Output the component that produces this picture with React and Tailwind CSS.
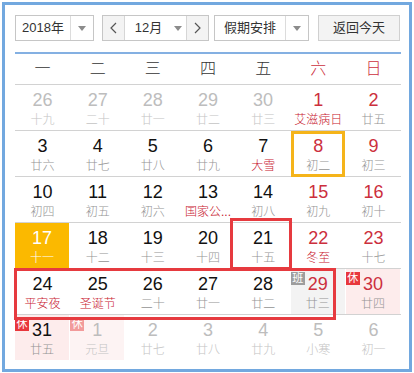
import React from 'react';

const font = { fontFamily: '"Liberation Sans", "Noto Sans CJK SC", sans-serif' };

// o: other month, h: holiday text (red), w: weekend number red
const rows = [
  [
    { d: 26, l: '十九', o: 1 }, { d: 27, l: '二十', o: 1 }, { d: 28, l: '廿一', o: 1 },
    { d: 29, l: '廿二', o: 1 }, { d: 30, l: '廿三', o: 1 },
    { d: 1, l: '艾滋病日', h: 1, w: 1 }, { d: 2, l: '廿五', w: 1 },
  ],
  [
    { d: 3, l: '廿六' }, { d: 4, l: '廿七' }, { d: 5, l: '廿八' }, { d: 6, l: '廿九' },
    { d: 7, l: '大雪', h: 1 }, { d: 8, l: '初二', w: 1, sel: 1 }, { d: 9, l: '初三', w: 1 },
  ],
  [
    { d: 10, l: '初四' }, { d: 11, l: '初五' }, { d: 12, l: '初六' }, { d: 13, l: '国家公...', h: 1 },
    { d: 14, l: '初八' }, { d: 15, l: '初九', w: 1 }, { d: 16, l: '初十', w: 1 },
  ],
  [
    { d: 17, l: '十一', today: 1 }, { d: 18, l: '十二' }, { d: 19, l: '十三' }, { d: 20, l: '十四' },
    { d: 21, l: '十五' }, { d: 22, l: '冬至', h: 1, w: 1 }, { d: 23, l: '十七', w: 1 },
  ],
  [
    { d: 24, l: '平安夜', h: 1 }, { d: 25, l: '圣诞节', h: 1 }, { d: 26, l: '二十' }, { d: 27, l: '廿一' },
    { d: 28, l: '廿二' }, { d: 29, l: '廿三', w: 1, badge: 'work' }, { d: 30, l: '廿四', w: 1, badge: 'rest' },
  ],
  [
    { d: 31, l: '廿五', badge: 'rest' }, { d: 1, l: '元旦', o: 1, badge: 'restFaded' }, { d: 2, l: '廿七', o: 1 },
    { d: 3, l: '廿八', o: 1 }, { d: 4, l: '廿九', o: 1 }, { d: 5, l: '小寒', o: 1 }, { d: 6, l: '初一', o: 1 },
  ],
];

function Caret() {
  return (
    <svg width="8" height="5" viewBox="0 0 8 5">
      <path d="M0 0h8L4 5z" fill="#8c8c8c" />
    </svg>
  );
}

function Chevron({ left }) {
  return (
    <svg width="7" height="12" viewBox="0 0 7 12">
      <path d={left ? 'M6 1L1 6l5 5' : 'M1 1l5 5-5 5'} fill="none" stroke="#555" strokeWidth="1.2" />
    </svg>
  );
}

function DayCell({ c }) {
  let bg = '';
  if (c.today) bg = 'bg-[#fbb900]';
  else if (c.badge === 'work') bg = 'bg-[#f3f3f3]';
  else if (c.badge === 'rest') bg = 'bg-[#fdecec]';
  else if (c.badge === 'restFaded') bg = 'bg-[#fdf3f3]';

  let num = 'text-[#111]';
  if (c.today) num = 'text-white';
  else if (c.o) num = 'text-[#bdbdbd]';
  else if (c.w) num = 'text-[#cc2f3d]';

  let lun = 'text-[#949494]';
  if (c.today) lun = 'text-white';
  else if (c.o) lun = 'text-[#c4c4c4]';
  else if (c.h) lun = 'text-[#c8202f]';

  return (
    <div className={`relative h-[45px] ${c.today || c.badge ? 'mr-[1px]' : ''} ${bg}`}>
      {c.badge === 'work' && (
        <span className="absolute left-0 top-[3px] w-[14px] h-[13px] bg-[#9d9d9d] text-white text-[11px] leading-[13px] text-center">班</span>
      )}
      {c.badge === 'rest' && (
        <span className="absolute left-0 top-[3px] w-[14px] h-[13px] bg-[#e8373c] text-white text-[11px] leading-[13px] text-center">休</span>
      )}
      {c.badge === 'restFaded' && (
        <span className="absolute left-0 top-[3px] w-[14px] h-[13px] bg-[#f29b9b] text-white text-[11px] leading-[13px] text-center">休</span>
      )}
      <div className={`pt-[5px] text-center text-[18px] leading-[20px] ${num}`}>{c.d}</div>
      <div className={`mt-[3px] text-center text-[12px] leading-[14px] font-light whitespace-nowrap ${lun}`}>{c.l}</div>
      {c.sel && <div className="absolute left-0 top-0 w-[54px] h-[46px] border-[3px] border-[#f5b41a]" />}
    </div>
  );
}

export default function App() {
  const week = ['一', '二', '三', '四', '五', '六', '日'];
  return (
    <div className="relative w-[414px] h-[373px] bg-white overflow-hidden" style={font}>
      <div className="ml-[2px] mt-[2px] w-[410px] h-[370px] border-[3px] border-[#72a8df] pl-[10px] pr-[8px] pt-[10px]">
        {/* toolbar */}
        <div className="flex items-center h-[26px] text-[13px] text-[#333]">
          <div className="flex h-full w-[79px] border border-[#c6c6c6] bg-white">
            <div className="w-[54px] flex items-center justify-center">2018年</div>
            <div className="flex-1 border-l border-[#dcdcdc] flex items-center justify-center"><Caret /></div>
          </div>
          <div className="flex h-full w-[107px] ml-[8px] border border-[#c6c6c6] bg-white">
            <div className="w-[22px] bg-[#f3f3f3] border-r border-[#d6d6d6] flex items-center justify-center"><Chevron left /></div>
            <div className="flex-1 flex items-center justify-center gap-[12px] pl-[6px]">
              <span>12月</span>
              <Caret />
            </div>
            <div className="w-[22px] bg-[#f3f3f3] border-l border-[#d6d6d6] flex items-center justify-center"><Chevron /></div>
          </div>
          <div className="flex h-full w-[95px] ml-[5px] border border-[#c6c6c6] bg-white">
            <div className="w-[70px] flex items-center justify-center">假期安排</div>
            <div className="flex-1 border-l border-[#dcdcdc] flex items-center justify-center"><Caret /></div>
          </div>
          <div className="h-full w-[82px] ml-[9px] border border-[#d0d0d0] bg-[#f3f3f3] flex items-center justify-center">返回今天</div>
        </div>

        <div className="mt-[11px] h-[2px] bg-[#84b0e2]" />

        {/* week header */}
        <div className="grid grid-cols-7 h-[31px] items-center border-b border-[#d2d2d2] text-[16px] font-light">
          {week.map((w, i) => (
            <div key={w} className={`text-center ${i >= 5 ? 'text-[#cc2f3d]' : 'text-[#333]'}`}>{w}</div>
          ))}
        </div>

        {/* days */}
        {rows.map((r, ri) => (
          <div key={ri} className={`grid grid-cols-7 ${ri < 5 ? 'border-b border-[#d2d2d2]' : ''}`}>
            {r.map((c, ci) => (
              <DayCell key={ci} c={c} />
            ))}
          </div>
        ))}
      </div>

      {/* annotation boxes */}
      <div className="absolute left-[230px] top-[218px] w-[62px] h-[52px] border-[3px] border-[#e63a3f]" />
      <div className="absolute left-[14px] top-[268px] w-[322px] h-[52px] border-[3px] border-[#e63a3f]" />
    </div>
  );
}
